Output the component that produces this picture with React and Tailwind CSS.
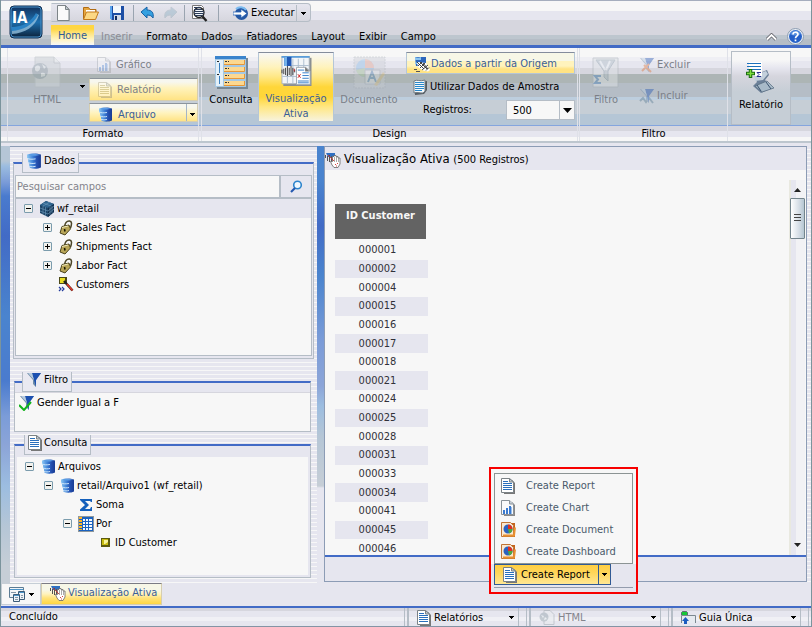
import React, { useState } from 'react';

/* ---------- icons ---------- */

function Caret({ className = '' }) {
  return (
    <svg width="5" height="3" viewBox="0 0 5 3" className={className} shapeRendering="crispEdges">
      <path d="M0 0h5v1H4v1H3v1H2V2H1V1H0z" fill="#000" />
    </svg>
  );
}

function LogoIcon() {
  return (
    <svg width="34" height="34" viewBox="0 0 34 34">
      <defs>
        <linearGradient id="logoBg" x1="0" y1="0" x2="0" y2="1">
          <stop offset="0" stopColor="#12305a" />
          <stop offset="0.5" stopColor="#1d6fae" />
          <stop offset="1" stopColor="#0c2138" />
        </linearGradient>
      </defs>
      <rect x="1" y="1" width="32" height="32" rx="4" fill="url(#logoBg)" stroke="#0d2c50" />
      <rect x="2" y="2" width="30" height="30" rx="3" fill="none" stroke="#4a94cc" />
      <path d="M3 25c9-1 19-5 25-16l2 1c-4 12-14 18-27 19z" fill="#9cc8e4" opacity=".75" />
      <path d="M2 22c12 0 20-5 25-14l2 2C24 20 14 25 3 26z" fill="#2a82c4" />
      <text x="3" y="18" fontFamily="DejaVu Sans Condensed, sans-serif" fontSize="15" fontWeight="bold" fill="#fff">IA</text>
    </svg>
  );
}

function PageIcon() {
  return (
    <svg width="16" height="16" viewBox="0 0 16 16">
      <path d="M3 1h7l4 4v11H3z" fill="#8b949a" opacity=".5" />
      <path d="M1.500.5h8l3.500 4v11H1.500z" fill="#fafafa" stroke="#7d8488" />
      <path d="M9.500.5v4H13z" fill="#c8d0d6" stroke="#7d8488" />
    </svg>
  );
}

function FolderIcon() {
  return (
    <svg width="17" height="16" viewBox="0 0 17 16">
      <path d="M1.500 14V2.500h5l1.500 2h6V7" fill="#e6a640" stroke="#b06c14" />
      <path d="M4 5h9v4H4z" fill="#fff" />
      <path d="M1.500 14.500L4.500 7h12l-3 7.500z" fill="#fcd884" stroke="#c27a1c" />
    </svg>
  );
}

function SaveIcon() {
  return (
    <svg width="16" height="16" viewBox="0 0 16 16">
      <path d="M1 1h14v14H3l-2-2z" fill="#1c4ea4" />
      <path d="M1 1h2v13H1z" fill="#5aa4ee" />
      <path d="M4 1h8v7H4z" fill="#f4f8fc" />
      <path d="M5 10h7v5H5z" fill="#d4dce8" />
      <path d="M6 11h2v4H6z" fill="#102c60" />
    </svg>
  );
}

function UndoIcon({ flip }) {
  return (
    <svg width="15" height="14" viewBox="0 0 15 14" className={flip ? '-scale-x-100 opacity-35' : ''}>
      <path d="M1 6l6-5v3c5 0 7 3 6 8-1-2-3-3-6-3v3z" fill={flip ? '#7aa6bc' : '#35a0e0'} stroke={flip ? '#88a0ac' : '#1660a4'} />
    </svg>
  );
}

function PreviewIcon() {
  return (
    <svg width="17" height="17" viewBox="0 0 17 17">
      <path d="M1.500.5h9l2 2v11h-11z" fill="#fff" stroke="#777" />
      <circle cx="8" cy="7.500" r="5" fill="#f2f6fa" stroke="#222" strokeWidth="1.300" />
      <path d="M3 2.500h7M3 4.500h8M3 6.500h10M3 8.500h10M4 10.500h8" stroke="#2c3c58" />
      <path d="M11.500 11.500l4 4.500" stroke="#222" strokeWidth="2.400" />
    </svg>
  );
}

function RunIcon() {
  return (
    <svg width="16" height="15" viewBox="0 0 16 15">
      <circle cx="8.500" cy="7.500" r="6.500" fill="#2658a4" />
      <path d="M3 3c3-3 8-2 10 1" stroke="#7cbcf0" strokeWidth="2" fill="none" />
      <path d="M0 6h8V3l6 4.500L8 12V9H0z" fill="#fff" stroke="#2a62b4" strokeWidth=".8" />
    </svg>
  );
}

function DbIcon({ size = 15 }) {
  return (
    <svg width={size} height={size} viewBox="0 0 15 15">
      <defs>
        <linearGradient id="dbBody">
          <stop offset="0" stopColor="#8cc8f4" />
          <stop offset="0.45" stopColor="#3a7cd4" />
          <stop offset="0.7" stopColor="#2450b0" />
          <stop offset="1" stopColor="#183c94" />
        </linearGradient>
      </defs>
      <path d="M1 1.500C4 0 11 0 14 1.500v12c-3 1.500-7 1.500-10 .5l-1-1v-3L2 9V6L1 5z" fill="url(#dbBody)" />
      <path d="M1 5c2 1 5 1 8 .5M2 9c2 1 5 1 7 .5M3 12.500c2 .5 4 .5 6 0" stroke="#d8ecfc" strokeWidth=".9" fill="none" />
      <path d="M2 1.800c3-1 8-1 11 0-3 1-8 1-11 0z" fill="#5a9ce4" />
    </svg>
  );
}

function DocIcon({ faded }) {
  return (
    <svg width="14" height="16" viewBox="0 0 14 16" className={faded ? 'opacity-35' : ''}>
      <path d="M3 2h8l3 3v11H3z" fill="#777" />
      <path d="M.5.5h8l4 3.500v10.500H.5z" fill="#fff" stroke={faded ? '#9a9070' : '#7b8286'} />
      <path d="M8.500.5V4h4z" fill="#c2cad0" stroke="#7b8286" />
      <path d="M2 3.500h5M2 5.500h9M2 7.500h9M2 9.500h9M2 11.500h9" stroke={faded ? '#9a9060' : '#2a70bc'} />
    </svg>
  );
}

function ChartDocIcon({ faded }) {
  return (
    <svg width="14" height="16" viewBox="0 0 14 16" className={faded ? 'opacity-30' : ''}>
      <path d="M3 2h8l3 3v11H3z" fill="#888" />
      <path d="M.5.5h8l4 3.500v10.500H.5z" fill="#fafafa" stroke="#8a9298" />
      <path d="M8.500.5V4h4" fill="#c8d0d8" stroke="#8a9298" />
      <path d="M2 10h2v4H2zM5 8h2v6H5zM8 6h2v8H8z" fill="#3a7ad0" />
      <path d="M10 7h1v7h-1z" fill="#9cc0ec" />
    </svg>
  );
}

function PieDocIcon() {
  return (
    <svg width="15" height="16" viewBox="0 0 15 16">
      <path d="M2 1h12v14H2z" fill="#c4641c" />
      <path d="M.5.5h9l3 3v11H.5z" fill="#fae8d0" stroke="#c07434" />
      <circle cx="7" cy="7" r="4.500" fill="#2c62c0" />
      <path d="M7 7V2.500A4.500 4.500 0 0 1 11.500 7z" fill="#e03020" />
      <path d="M7 7h4.500A4.500 4.500 0 0 1 8 11.400z" fill="#50a840" />
      <path d="M2 13.500h11l1-8" stroke="#e89030" strokeWidth="2" fill="none" />
    </svg>
  );
}

function HtmlIcon() {
  return (
    <svg width="32" height="32" viewBox="0 0 32 32" className="opacity-50">
      <path d="M4 1h19l6 6v24H4z" fill="#cdd3d6" stroke="#b4bcc0" />
      <path d="M23 1v6h6" fill="#e4e8ea" stroke="#aab2b6" />
      <circle cx="9" cy="15" r="8" fill="#97a6ae" />
      <path d="M4 11c3-3 6-1 5 2s-4 3-5 1zM10 17c3-1 5 0 4 3l-4 1zM11 8l4 3-2 2z" fill="#dce4e4" />
    </svg>
  );
}

function HtmlSmallIcon() {
  return (
    <svg width="16" height="15" viewBox="0 0 16 15" className="opacity-50">
      <path d="M5 .5h6l4 4v10H5z" fill="#e8ebee" stroke="#a0a8ae" />
      <circle cx="5" cy="7" r="4.500" fill="#9aa8b0" />
      <path d="M2 5l3 1-1 2zM6 7l2 2-3 1z" fill="#e8eef0" />
    </svg>
  );
}

function QueryIcon() {
  return (
    <svg width="33" height="33" viewBox="0 0 33 33">
      <path d="M2 2h31v31H2z" fill="#788894" />
      <path d="M0 0h31v31H0z" fill="#a4c8e4" />
      <path d="M0 0h31v3H0z" fill="#3a84cc" />
      <path d="M1 4h7v26H1z" fill="#e4f0f8" />
      <path d="M4.500 7v10M4.500 20v8" stroke="#3a80c0" />
      <path d="M2 5h2v1H2zM2 18h2v1H2z" fill="#222" />
      <path d="M9 4h20v5H9zM9 11h20v5H9zM9 18h20v5H9zM9 25h20v5H9z" fill="#fcd890" />
      <path d="M9 8.500h20.500V4M9 15.500h20.500V11M9 22.500h20.500V18M9 29.500h20.500V25" fill="none" stroke="#e89838" />
      <path d="M10 5.500h4M10 12.500h4M10 19.500h4M10 26.500h4" stroke="#333" strokeDasharray="2 1" />
    </svg>
  );
}

function LiveIcon() {
  return (
    <svg width="33" height="33" viewBox="0 0 33 33">
      <path d="M2 2h31v31H2z" fill="#8a8f92" />
      <path d="M.5.5h30v30H.5z" fill="#f2f5f8" stroke="#a8b0b8" />
      <path d="M0 0h31v2H0z" fill="#5a9cd8" />
      <path d="M12.500 3v27M18.500 3v27M24.500 3v27M6.500 20v10M1 22.500h29M11 10.500h19" stroke="#a9bccd" />
      <path d="M3 1h8v10H3z" fill="#2058b4" />
      <path d="M3 1h3v10H3z" fill="#75b4ec" />
      <path d="M.5 15v4M2.500 14v6M4.500 13v8M6.500 11v11M8.500 13v8M10.500 11v11M12.500 13v8M14.500 15v3" stroke="#333" />
      <path d="M16.500 12.500h10l5 4v15h-15z" fill="#fff" stroke="#98a2ac" />
      <path d="M26 12v5h5z" fill="#777" />
      <path d="M18 15.500h7M23 18.500h7M23 21.500h7M23 24.500h7M18 27.500h12M18 29.500h12" stroke="#2a76c4" />
      <path d="M18 20l3 4M21 20l-3 4M14 14v3" stroke="#d02020" />
    </svg>
  );
}

function DocumentIcon() {
  return (
    <svg width="33" height="33" viewBox="0 0 33 33" className="opacity-35">
      <path d="M1 1h31v31H1z" fill="#c8ccd0" stroke="#a0a8b0" strokeDasharray="2 1" />
      <circle cx="12" cy="12" r="9" fill="#7cb4e4" />
      <path d="M12 12V3a9 9 0 0 1 9 9z" fill="#e49880" />
      <path d="M12 12l-9 2a9 9 0 0 0 9 7z" fill="#a8cc98" />
      <path d="M12 14h15v14H12z" fill="#e8eaec" stroke="#9ca4ac" />
      <path d="M15 26l4-10 4 10M16 22h6" stroke="#4880b4" strokeWidth="2" fill="none" />
      <path d="M21 29l9-13 2 2-8 12z" fill="#d8b870" />
    </svg>
  );
}

function HandDbIcon() {
  return (
    <svg width="17" height="16" viewBox="0 0 17 16">
      <path d="M1 1h11v9H2z" fill="#2c66bc" />
      <path d="M1 1c2 1 4 1 6 0v3H1zM1 6c2 1 3 1 5 0v2H1z" fill="#8cc4f0" />
      <path d="M3 6l9 1 4 7-2 1.500-5-1L4 11z" fill="#fff" />
      <path d="M3 6l7 7M6 6l7 7M9 7l5 6M4 10l4-4M6 12l5-5M8 14l6-5M12 14.500l3-3" stroke="#333" strokeWidth=".9" />
      <path d="M0 13.500h3M2 15.500h4" stroke="#555" />
    </svg>
  );
}

function SampleIcon() {
  return (
    <svg width="16" height="16" viewBox="0 0 16 16">
      <path d="M2 3c3-2 6 1 12-1v9l-3 4-9 1z" fill="#555c62" />
      <path d="M1 2c3-2 6 1 11-1v11l-2 2c-4 0-6-1-9 0z" fill="#f4f8fb" stroke="#707a82" />
      <path d="M2 3.500h9M2 5.500h9M2 7.500h9M2 9.500h9M2 11.500h7" stroke="#2888cc" />
    </svg>
  );
}

function LiveHandIcon() {
  return (
    <svg width="16" height="16" viewBox="0 0 16 16">
      <path d="M1 1h9v4H3z" fill="#2f6fc2" />
      <path d="M.5 3v3M2.500 4v5M4.500 3v7M6.500 4v7" stroke="#555" />
      <path d="M5.500 9.500l2 0V4.500h1.500v-1h2v1h2v1.500h2V12l-2 3.500H9L7 13z" fill="#fff" stroke="#666" strokeWidth=".8" />
      <path d="M9.500 5v5M11.500 5v5M13.500 6v4" stroke="#888" strokeWidth=".7" />
      <path d="M3 3l6 6M10 12.500h1M12 11.500h1M11 14h1" stroke="#cf3030" strokeWidth=".9" />
    </svg>
  );
}

function FilterBigIcon() {
  return (
    <svg width="28" height="32" viewBox="0 0 28 32" className="opacity-50">
      <path d="M1 2h25v29H1z" fill="#dde1e4" stroke="#a8b0b6" />
      <path d="M4 4h19l-7 11v10l-4-4v-6z" fill="#b8c4cc" stroke="#98a8b4" />
      <path d="M8 5l5 9M18 5l-4 9" stroke="#e8eef2" strokeWidth="2" />
      <path d="M9 20H3l3 3.500L3 27h6" fill="none" stroke="#5c8cc0" strokeWidth="2" />
    </svg>
  );
}

function FunnelIcon({ mark, faded }) {
  return (
    <svg width="16" height="16" viewBox="0 0 16 16" className={faded ? 'opacity-40' : ''}>
      {mark === 'plus' && <path d="M1 13l3-3 3 4 3-4 4 5" stroke="#567890" strokeWidth="2" fill="none" />}
      <path d="M1 1h14l-5 7v7l-3-3V8z" fill="#6f8ca8" />
      <path d="M6 1h9l-5 7v7L8 8z" fill="#1c50b0" />
      <path d="M2 1h4l2 7z" fill="#b8cce0" />
      {mark === 'x' && <path d="M3 14l7-7M5 8l7 7" stroke="#e07030" strokeWidth="2" />}
      {mark === 'check' && <path d="M0 10l5 5 7-8" stroke="#12b41c" strokeWidth="2" fill="none" />}
    </svg>
  );
}

function ReportBigIcon() {
  return (
    <svg width="32" height="34" viewBox="0 0 32 34">
      <path d="M9 14l13-5 2 5-4 5 8 8-12 5-8-7 4-4z" fill="#6c8098" />
      <path d="M9 14l12-4 2 3-5 6-8 1z" fill="#c4d0dc" />
      <path d="M10 25l12-5 7 7-12 4z" fill="#a8bac8" stroke="#54687c" strokeWidth=".7" />
      <path d="M12 24l4 6M21 21l5 7" stroke="#3c5470" />
      <path d="M4 1h13v14H4z" fill="#fff" />
      <path d="M2 2.500h14M2 5.500h14M2 8.500h14" stroke="#1c70bc" />
      <path d="M16 11.500h-4l2 2-2 2h4" stroke="#242c90" fill="none" />
      <path d="M5.500 8v9M1 12.500h9" stroke="#1c6c14" strokeWidth="3.500" />
      <path d="M5.500 9v7M2 12.500h7" stroke="#7edc3c" strokeWidth="1.500" />
    </svg>
  );
}

function CubeIcon() {
  return (
    <svg width="16" height="16" viewBox="0 0 16 16">
      <path d="M1 4l6-4 8 3v8l-6 5-8-4z" fill="#1c4468" />
      <path d="M1 4l6-4 8 3-6 4z" fill="#2f648f" />
      <path d="M9 7l6-4v8l-6 5z" fill="#12304f" />
      <path d="M1 7l8 3 6-5M1 10l8 3 6-5M4 5v8M6.500 6v9M11 6v8M13 5v7M4 2l8 3M4 5l7-4" stroke="#6f9cbe" strokeWidth=".6" fill="none" />
    </svg>
  );
}

function LockIcon() {
  return (
    <svg width="14" height="16" viewBox="0 0 14 16">
      <path d="M5.500 7C6 3 8 .8 10.500 1c2.500.3 2.500 3 1 7" fill="none" stroke="#4c4628" strokeWidth="1.500" />
      <path d="M3 6.500L10 5l1.500 4-5.500 6L1 13z" fill="#b8a658" stroke="#3c3410" strokeWidth=".9" />
      <path d="M3 7.500L9 6" stroke="#f0eac0" />
      <path d="M5.500 9l.5 2.500" stroke="#1c1800" strokeWidth="1.600" />
    </svg>
  );
}

function WandIcon() {
  return (
    <svg width="16" height="16" viewBox="0 0 16 16">
      <path d="M1 0h8v7H1z" fill="#4c4a18" />
      <path d="M2 1h5v5H2z" fill="#e8dc20" />
      <path d="M6 4l8.500 9.500" stroke="#222" strokeWidth="2.500" />
      <path d="M9 7l5.500 6.500" stroke="#e03828" strokeWidth="1.800" />
      <path d="M1 10l2 2-2 2M4 10l2 2-2 2" stroke="#243c9c" fill="none" strokeWidth="1.200" />
    </svg>
  );
}

function SigmaIcon() {
  return (
    <svg width="13" height="12" viewBox="0 0 13 12">
      <path d="M0 0h12v3h-1l-1-1H5l4 4-4 4h5l1-2h1v4H0v-1.500L5 6 0 1z" fill="#1460bc" />
    </svg>
  );
}

function GridIcon() {
  return (
    <svg width="16" height="16" viewBox="0 0 16 16" shapeRendering="crispEdges">
      <path d="M0 0h16v16H0z" fill="#8e979c" />
      <path d="M1 1h14v14H1z" fill="#1a62c0" />
      <path d="M1 1h3v2H1zM1 4h3v2H1zM1 7h3v2H1zM1 10h3v2H1zM1 13h3v1H1z" fill="#fcb428" />
      <path d="M5 3h2v2H5zM8 3h2v2H8zM11 3h3v2h-3zM5 6h2v2H5zM8 6h2v2H8zM11 6h3v2h-3zM5 9h2v2H5zM8 9h2v2H8zM11 9h3v2h-3zM5 12h2v2H5zM8 12h2v2H8zM11 12h3v2h-3z" fill="#f4f8fc" />
    </svg>
  );
}

function FieldIcon() {
  return (
    <svg width="9" height="9" viewBox="0 0 9 9">
      <path d="M0 0h9v9H0z" fill="#5c5a10" />
      <path d="M1 1h6v6H1z" fill="#c8bc10" />
      <path d="M3 2h4v2L4 6H3z" fill="#f8f49c" />
    </svg>
  );
}

function SearchIcon() {
  return (
    <svg width="13" height="13" viewBox="0 0 13 13">
      <circle cx="7.500" cy="5" r="3.800" fill="#f0f8ff" stroke="#2c84cc" strokeWidth="1.600" />
      <path d="M5 8l-4 4" stroke="#2458b0" strokeWidth="2.200" />
    </svg>
  );
}

function WindowsIcon() {
  return (
    <svg width="16" height="15" viewBox="0 0 16 15">
      <path d="M.5.5h14v3M.5.5v10h4" fill="#eef3f8" stroke="#5c7c94" />
      <path d="M1 2h13v1H1z" fill="#4c94c8" />
      <path d="M9.500 4.500h6v8h-6z" fill="#eef3f8" stroke="#3c5c78" />
      <path d="M4.500 7.500h6v7h-6z" fill="#eef3f8" stroke="#3c5c78" />
      <path d="M10 5.500h5M5 8.500h5" stroke="#4c94c8" />
      <path d="M2 5.500h5M6 10.500h3M6 12.500h3M12 8.500h2M12 10.500h2" stroke="#8498a8" />
    </svg>
  );
}

function TabFolderIcon() {
  return (
    <svg width="15" height="13" viewBox="0 0 15 13">
      <path d="M.5 4V1.500L1.500.5h4l1 1V4" fill="#18c838" stroke="#606c74" />
      <path d="M.5 12V4.500h14V12" fill="#e6eaf0" stroke="#7c8890" />
      <path d="M4.500 6L8 10H6v3H3v-3H1z" fill="#1c5cc0" />
    </svg>
  );
}

function HelpIcon() {
  return (
    <svg width="17" height="17" viewBox="0 0 17 17">
      <circle cx="8.500" cy="8.500" r="8" fill="#e8eef6" stroke="#8c9cb0" />
      <circle cx="8.500" cy="8.500" r="6.500" fill="#2460c8" />
      <path d="M3 6a6 6 0 0 1 11 0c-3 2-8 2-11 0z" fill="#6ca4e8" opacity=".7" />
      <path d="M6 6.500C6 3.500 11 3.500 11 6.300c0 2-2.500 1.700-2.500 4M8.500 11.500v1.800" stroke="#fff" strokeWidth="1.700" fill="none" />
    </svg>
  );
}

/* ---------- header ---------- */

const tabs = ['Home', 'Inserir', 'Formato', 'Dados', 'Fatiadores', 'Layout', 'Exibir', 'Campo'];

function Divider() {
  return <span className="h-4 w-px bg-[#9aa4b0]" />;
}

function Header() {
  const [tab, setTab] = useState('Home');

  return (
    <header className="flex h-12 shrink-0 border-t border-b-3 border-t-[#a5adbd] border-b-[#426bc6] bg-[linear-gradient(#f7f7f7_0_10px,#e6e6ef_10px_19px,#d6d6de_19px_34px,#bdc6ce_34px_38px,#b5bdc6_38px)] pl-2">
      <button aria-label="Menu" className="mt-1 h-[34px] w-[34px]"><LogoIcon /></button>
      <div className="flex flex-1 flex-col pl-2">
        <div className="mt-0.5 flex h-[19px] w-[260px] items-center rounded-r-sm border border-[#b5bdc6] border-l-transparent bg-[linear-gradient(#e6e6ef,#d6d6de)] pt-px pl-1">
          <button aria-label="Novo" className="mr-2.5"><PageIcon /></button>
          <button aria-label="Abrir" className="mr-2.5"><FolderIcon /></button>
          <button aria-label="Salvar" className="mr-2"><SaveIcon /></button>
          <Divider />
          <button aria-label="Desfazer" className="mr-2 ml-1.5"><UndoIcon /></button>
          <button aria-label="Refazer" className="mr-1.5"><UndoIcon flip /></button>
          <Divider />
          <button aria-label="Visualizar" className="mr-2.5 ml-1.5"><PreviewIcon /></button>
          <Divider />
          <button className="ml-3.5 flex items-center gap-0.5"><RunIcon />Executar</button>
          <button aria-label="Opções de execução" className="ml-auto flex h-full w-[14px] items-center justify-center border-l border-[#b5bdc6]"><Caret /></button>
        </div>
        <nav className="mt-[3px] flex h-5 items-stretch">
          {tabs.map((t) => (
            <button
              key={t}
              disabled={t === 'Inserir'}
              onClick={() => setTab(t)}
              className={
                t === tab
                  ? 'w-[43px] bg-[linear-gradient(#ffd642_0_4px,#ffe37b_8px,#fff3bd_14px,#f7f7f7)] pt-0.5 text-[#315a94]'
                  : t === 'Inserir'
                    ? 'px-[7px] pt-[3px] text-[#8c8c94]'
                    : 'px-[7px] pt-[3px]'
              }
            >
              {t}
            </button>
          ))}
        </nav>
      </div>
      <div className="flex items-end gap-2.5 pr-[7px]">
        <button aria-label="Recolher faixa" className="mb-1">
          <svg width="11" height="8" viewBox="0 0 11 8">
            <path d="M1 6.500L5.500 2 10 6.500" fill="none" stroke="#63636b" strokeWidth="3.500" />
            <path d="M1 6.500L5.500 2 10 6.500" fill="none" stroke="#fff" strokeWidth="1.800" />
          </svg>
        </button>
        <button aria-label="Ajuda"><HelpIcon /></button>
      </div>
    </header>
  );
}

/* ---------- ribbon ---------- */

function Group({ label, className, children }) {
  return (
    <section className={`flex flex-col border-l border-[#dfe1e8] ${className}`}>
      <div className="flex h-[77px] items-start">{children}</div>
      <h2 className="h-[17px] text-center leading-5">{label}</h2>
    </section>
  );
}

function BigButton({ icon, label, className = '' }) {
  return (
    <button className={`flex flex-col items-center pt-2 text-center ${className}`}>
      <span className="flex h-[34px]">{icon}</span>
      <span className="pt-0.5 leading-[15px]">{label}</span>
    </button>
  );
}

function Ribbon() {
  return (
    <div className="flex h-[95px] shrink-0 border-b-2 border-[#bdc6ce] bg-[linear-gradient(#f7f7f7_0_9px,#efeff4_9px_13px,#e6e6ef_13px_20px,#d6d6de_20px_26px,#adb5b5_26px_35px,#b5bdc6_35px_49px,#bdcede_49px_52px,#c6ced6_52px_66px,#b5c6d6_66px_77px,#84a5de_77px_78px,#d6d6de_78px_83px,#e6e6ef_83px_89px,#f7f7f7_89px)] pl-[6px]">
      <Group label="Formato" className="w-[192px] shrink-0 border-r">
        <BigButton icon={<HtmlIcon />} label="HTML" className="ml-2 w-[62px] text-[#7b8088]" />
        <button aria-label="Formatos" className="mt-[37px] w-[11px]"><Caret className="ml-0.5" /></button>
        <div className="flex w-[109px] flex-col pt-1">
          <button className="flex h-6 items-center gap-[5px] pt-px pl-2 text-[#7b8088]"><ChartDocIcon faded />Gráfico</button>
          <button className="mt-0.5 flex h-[23px] items-center gap-[5px] border border-t-[#8c949c] border-[#d6ceb0] bg-[linear-gradient(#f7f7ef_0_3px,#fff3bd_9px,#ffe384)] pt-px pl-2 text-[#7b8088]"><DocIcon faded />Relatório</button>
          <div className="mt-0.5 flex h-[19px] border border-t-[#8c949c] border-[#d6ceb0] bg-[linear-gradient(#f7f7ef_0_3px,#fff3bd_9px,#ffe384)]">
            <button className="flex flex-1 items-center gap-[5px] pt-1 pl-2 text-[#3a5f9a]"><DbIcon />Arquivo</button>
            <button aria-label="Opções de arquivo" className="flex w-[11px] items-center justify-center border-l border-[#a5b5c6] pt-1"><Caret /></button>
          </div>
        </div>
      </Group>

      <Group label="Design" className="ml-0.5 w-[377px] shrink-0 border-r">
        <BigButton icon={<QueryIcon />} label="Consulta" className="w-14 pl-0.5" />
        <button className="mt-1 flex h-[70px] w-[76px] flex-col items-center border border-t-[#848c9c] border-[#b5c6d6] bg-[linear-gradient(#f7f7f7,#fff3bd_14px,#ffe784_24px,#ffd639_34px,#ffd639_44px,#ffe784_54px,#f7f3de)] pt-[3px] text-[#3a5f9a]">
          <LiveIcon />
          <span className="pt-[5px] leading-[15px]">Visualização Ativa</span>
        </button>
        <BigButton icon={<DocumentIcon />} label="Documento" className="w-[70px] text-[#7b8088]" />
        <div className="ml-[2px] flex w-[169px] flex-col pt-1">
          <button className="flex h-[22px] items-center border border-t-[#848c9c] border-[#b5c6d6] bg-[linear-gradient(#f7f7e7_0_8px,#fff3bd_8px_13px,#ffe384_16px)] pt-0.5 pl-[7px] text-[#3a5f9a]"><HandDbIcon />Dados a partir da Origem</button>
          <button className="flex h-[26px] items-center gap-px pl-[7px]"><SampleIcon />Utilizar Dados de Amostra</button>
          <div className="flex h-5 items-center">
            <label htmlFor="registros" className="w-[100px] pl-[17px]">Registros:</label>
            <div className="relative h-5 flex-1">
              <select id="registros" defaultValue="500" className="h-5 w-full appearance-none border border-[#b5bdc6] bg-[#f7f7f7] pt-0.5 pl-1.5 outline-none">
                <option>100</option>
                <option>500</option>
                <option>1000</option>
              </select>
              <span className="pointer-events-none absolute inset-y-0 right-0 flex w-4 items-center justify-center border border-[#b5bdc6]">
                <svg width="9" height="5" viewBox="0 0 9 5"><path d="M0 0h9L4.500 5z" /></svg>
              </span>
            </div>
          </div>
        </div>
      </Group>

      <Group label="Filtro" className="ml-px w-[149px] shrink-0 border-r">
        <BigButton icon={<FilterBigIcon />} label="Filtro" className="w-[52px] text-[#7b8088]" />
        <div className="flex flex-col gap-[15px] pt-[9px] pl-[7px] text-[#7b8088]">
          <button className="flex h-4 items-center gap-0.5"><FunnelIcon mark="x" faded />Excluir</button>
          <button className="flex h-4 items-center gap-0.5"><FunnelIcon mark="plus" faded />Incluir</button>
        </div>
      </Group>

      <div className="pt-[3px] pl-[3px]">
        <button className="flex h-[74px] w-[60px] flex-col items-center border border-[#b5bdc6] bg-[linear-gradient(#f7f7f7_0_8px,#e6e6ef_16px,#d6d6de_24px,#c6ced6_40px,#c6ced6)] pt-[9px]">
          <ReportBigIcon />
          <span className="pt-0.5 leading-[15px]">Relatório</span>
        </button>
      </div>
    </div>
  );
}

/* ---------- left side ---------- */

function Panel({ icon, title, className = '', children }) {
  return (
    <section className={`flex flex-col border border-t-2 border-[#b5bdc6] border-t-[#426bc6] bg-[#e6e6ef] ${className}`}>
      <h2 className="relative -mt-[11px] ml-[7px] flex h-5 items-center gap-0.5 self-start border border-t-0 border-[#b5bdc6] bg-[#e9e9f1] px-[3px] pb-1">
        {icon}
        {title}
      </h2>
      {children}
    </section>
  );
}

function Toggle({ open }) {
  return (
    <button aria-label={open ? 'Recolher' : 'Expandir'} className="flex h-[9px] w-[9px] shrink-0 items-center justify-center rounded-[1px] border border-[#7b9cad] bg-[#f2f2ee]">
      <svg width="5" height="5" viewBox="0 0 5 5" shapeRendering="crispEdges">
        <path d={open ? 'M0 2h5v1H0z' : 'M0 2h5v1H0zM2 0h1v5H2z'} />
      </svg>
    </button>
  );
}

function Row({ indent, toggle, icon, label, selected }) {
  return (
    <li className={`flex h-[19px] items-center ${indent} ${selected ? 'bg-[#e6e6ef]' : ''}`}>
      {toggle ? <Toggle open={toggle === 'open'} /> : <span className="w-[9px]" />}
      <span className="mr-0.5 ml-1.5 flex w-4 shrink-0 justify-center">{icon}</span>
      <span className="whitespace-nowrap">{label}</span>
    </li>
  );
}

function Sidebar() {
  return (
    <aside className="flex w-[307px] shrink-0 flex-col border-t border-[#8c9cb5] bg-[repeating-linear-gradient(#e6e6ef_0_3px,#f7f7f7_3px_4px)] pr-[3px] pl-[3px]">
      <Panel icon={<DbIcon size={16} />} title="Dados" className="mt-[15px] h-[197px] px-px pb-0.5">
        <div className="mt-0.5 flex h-[23px] border border-[#b5bdc6]">
          <input aria-label="Pesquisar campos" placeholder="Pesquisar campos" className="min-w-0 flex-1 bg-[#f7f7f7] pl-px outline-none placeholder:text-[#84848c]" />
          <button aria-label="Pesquisar" className="flex w-8 items-center justify-center border-l-2 border-[#b5bdc6]"><SearchIcon /></button>
        </div>
        <ul className="flex-1 border border-[#b5bdc6] bg-[#f7f7f7]">
          <Row indent="pl-2" toggle="open" icon={<CubeIcon />} label="wf_retail" selected />
          <Row indent="pl-[27px]" toggle="closed" icon={<LockIcon />} label="Sales Fact" />
          <Row indent="pl-[27px]" toggle="closed" icon={<LockIcon />} label="Shipments Fact" />
          <Row indent="pl-[27px]" toggle="closed" icon={<LockIcon />} label="Labor Fact" />
          <Row indent="pl-[27px]" icon={<WandIcon />} label="Customers" />
        </ul>
      </Panel>

      <Panel icon={<FunnelIcon />} title="Filtro" className="mt-[22px] mr-[3px] ml-px h-[51px]">
        <div className="flex flex-1 items-start gap-0.5 border-t border-[#d6d6de] bg-[#f7f7f7] pt-0.5 pl-1">
          <FunnelIcon mark="check" />
          <span>Gender Igual a F</span>
        </div>
      </Panel>

      <Panel icon={<DocIcon />} title="Consulta" className="mt-3 mr-[3px] ml-px flex-1 px-0.5 pb-0.5">
        <ul className="mt-0.5 flex-1 bg-[#f7f7f7]">
          <Row indent="pl-2" toggle="open" icon={<DbIcon />} label="Arquivos" />
          <Row indent="pl-[27px]" toggle="open" icon={<DbIcon />} label="retail/Arquivo1 (wf_retail)" />
          <Row indent="pl-[46px]" icon={<SigmaIcon />} label="Soma" />
          <Row indent="pl-[46px]" toggle="open" icon={<GridIcon />} label="Por" />
          <Row indent="pl-[65px]" icon={<FieldIcon />} label="ID Customer" />
        </ul>
      </Panel>
      <div className="h-[5px] shrink-0" />
    </aside>
  );
}

/* ---------- preview ---------- */

const ids = [
  '000001', '000002', '000004', '000015', '000016', '000017', '000018', '000021', '000024',
  '000025', '000028', '000031', '000033', '000034', '000041', '000045', '000046',
];

function ScrollBar() {
  return (
    <div className="mt-[10px] mr-px flex w-4 shrink-0 flex-col items-center bg-[linear-gradient(90deg,#e9e9e0_0_2px,#e6e6ef_2px_7px,#f2f2f5_7px)] py-2">
      <svg width="7" height="4" viewBox="0 0 7 4"><path d="M0 4h7L3.500 0z" fill="#222" /></svg>
      <div className="mt-1.5 flex h-[41px] w-[15px] shrink-0 items-center justify-center rounded-[1px] border border-[#73848c] bg-[linear-gradient(90deg,#fff,#d6dee6_60%,#b5c6d2)]">
        <svg width="7" height="9" viewBox="0 0 7 9" shapeRendering="crispEdges"><path d="M0 0h7v1H0zM0 3h7v1H0zM0 6h7v1H0z" fill="#444" /></svg>
      </div>
      <svg width="7" height="4" viewBox="0 0 7 4" className="mt-auto"><path d="M0 0h7L3.500 4z" fill="#222" /></svg>
    </div>
  );
}

const createOptions = [
  { label: 'Create Report', icon: <DocIcon /> },
  { label: 'Create Chart', icon: <ChartDocIcon /> },
  { label: 'Create Document', icon: <PieDocIcon /> },
  { label: 'Create Dashboard', icon: <PieDocIcon /> },
];

function CreateMenu() {
  return (
    <div className="absolute -bottom-[13px] left-[164px] flex h-[127px] w-[149px] flex-col border-2 border-[#f70000] bg-[linear-gradient(#f7f7f7_0_95px,#e6e6ef_95px)] px-[3px] pt-1">
      <ul className="border border-[#8c9494] bg-[#f7f7f7] pt-px">
        {createOptions.map((o) => (
          <li key={o.label}>
            <button className="flex h-[22px] w-full items-center pl-1.5 text-[#4a5a6b]">
              <span className="w-[25px]">{o.icon}</span>
              {o.label}
            </button>
          </li>
        ))}
      </ul>
      <div className="flex h-[21px] w-[117px] shrink-0 border border-[#315a94] bg-[linear-gradient(#ffce42,#ffd65a_8px,#ffe794)]">
        <button className="flex flex-1 items-center gap-1 pl-2 whitespace-nowrap"><DocIcon />Create Report</button>
        <button aria-label="Opções de criação" className="flex w-3 items-center justify-center border-l border-[#315a94]"><Caret /></button>
      </div>
      <div className="mt-0.5 border-t border-[#949cad]" />
    </div>
  );
}

function Preview() {
  return (
    <main className="relative mb-px flex min-w-0 flex-1 flex-col border border-[#8c9cb5] bg-[#e6e6ef]">
      <h1 className="flex h-[23px] shrink-0 items-center gap-[3px] pt-0.5 text-[13px]">
        <LiveHandIcon />
        <span>Visualização Ativa <span className="text-[11px]">(500 Registros)</span></span>
      </h1>
      <div className="flex min-h-0 flex-1 border-b-2 border-[#426bc6] bg-[#f7f7f7]">
        <div className="min-h-0 flex-1 overflow-hidden pt-[34px] pl-[10px]">
          <table className="w-[93px] border-collapse text-center">
            <thead>
              <tr>
                <th className="flex h-[35px] w-[91px] justify-center bg-[#636363] pt-1 text-[11px] text-[#f7f7f7]">ID Customer</th>
              </tr>
            </thead>
          </table>
          <table aria-label="ID Customer" className="mt-0.5 h-[317px] w-[93px] border-collapse text-center text-[#313139]">
            <tbody>
              {ids.map((id) => (
                <tr key={id} className="even:bg-[#e6e6ef]">
                  <td className="p-0 pr-2 leading-3">{id}</td>
                </tr>
              ))}
            </tbody>
          </table>
        </div>
        <ScrollBar />
      </div>
      <div className="h-6 shrink-0" />
      <CreateMenu />
    </main>
  );
}

/* ---------- bottom ---------- */

function StatusCell({ icon, label, className }) {
  return (
    <div className={`flex border-l-2 border-[#b5bdc6] ${className}`}>
      <button className="flex flex-1 items-center border-r border-[#b5bdc6] pt-px pr-1 pl-2">
        {icon}
        <span className="ml-[3px]">{label}</span>
        <Caret className="ml-auto" />
      </button>
      <span className="mr-0.5 w-2 border-r border-[#b5bdc6]" />
    </div>
  );
}

export default function App() {
  return (
    <div className="flex h-screen min-h-[560px] flex-col overflow-hidden border-x border-[#7b949c] bg-[#e6e6ef] font-['DejaVu_Sans_Condensed','DejaVu_Sans',sans-serif] text-[11px] leading-4 font-normal text-black">
      <Header />
      <Ribbon />
      <div className="flex min-h-0 flex-1 pt-[3px]">
        <div className="w-[9px] shrink-0 bg-[linear-gradient(#b5c6d6_0_15px,#9cbde0_20px,#7b9cd8_36px,#4a7bce_50px,#426bc6_90px,#4a84ce_170px,#4a7bce_235px,#7b9cd8_270px,#8ca5d8_300px,#9cbde0_340px,#b5c6d6_380px,#c6ced6_420px)]" />
        <Sidebar />
        <div className="w-[7px] shrink-0 bg-[linear-gradient(#4a84ce_0_35px,#426bc6_80px,#4a84ce_130px,#7b9cd8_195px,#8ca5d8_240px,#9cbde0_260px,#b5c6d6_290px,#c6ced6_340px,#e6e6ef_342px)]" />
        <Preview />
        <div className="w-1 shrink-0 bg-[repeating-linear-gradient(#e6e6ef_0_3px,#f7f7f7_3px_4px)]" />
      </div>

      <div className="flex h-[25px] shrink-0 border-b-2 border-[#426bc6] bg-[#e6e6ef]">
        <button aria-label="Janelas" className="mb-px flex w-10 items-center justify-center gap-1 border border-[#c6ced6] bg-[#f7f7f7]"><WindowsIcon /><Caret /></button>
        <button className="mb-px flex items-center gap-0.5 border border-t-[#7b7b84] border-[#d6ceb0] bg-[linear-gradient(#f7f7e7_0_6px,#fff3bd_10px,#ffe37b_14px,#ffd642)] pr-1 pb-0.5 pl-2 text-[#3a5f9a]"><LiveHandIcon />Visualização Ativa</button>
      </div>
      <footer className="flex h-[19px] shrink-0 border-b border-[#8494a5] bg-[linear-gradient(#d6d6de_0_3px,#e6e6ef_3px_9px,#f0f0f5_9px_13px,#e6e6ef_13px)]">
        <div className="mr-0.5 flex flex-1 items-center border-r border-[#b5bdc6] pl-2">Concluído</div>
        <StatusCell className="w-[122px]" icon={<DocIcon />} label="Relatórios" />
        <StatusCell className="w-[142px] text-[#84848c]" icon={<HtmlSmallIcon />} label="HTML" />
        <StatusCell className="w-[140px]" icon={<TabFolderIcon />} label="Guia Única" />
      </footer>
    </div>
  );
}
